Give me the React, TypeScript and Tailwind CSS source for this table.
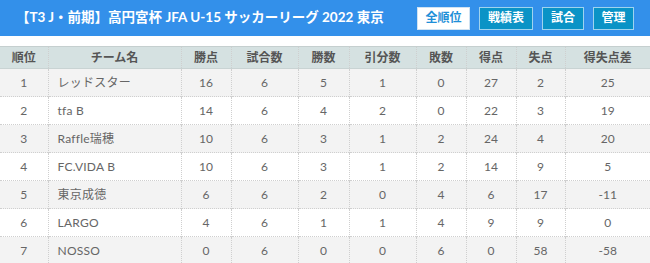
const rows = [
  { rank: 1, team: 'レッドスター', pts: 16, gp: 6, w: 5, d: 1, l: 0, gf: 27, ga: 2, gd: 25 },
  { rank: 2, team: 'tfa B', pts: 14, gp: 6, w: 4, d: 2, l: 0, gf: 22, ga: 3, gd: 19 },
  { rank: 3, team: 'Raffle瑞穂', pts: 10, gp: 6, w: 3, d: 1, l: 2, gf: 24, ga: 4, gd: 20 },
  { rank: 4, team: 'FC.VIDA B', pts: 10, gp: 6, w: 3, d: 1, l: 2, gf: 14, ga: 9, gd: 5 },
  { rank: 5, team: '東京成徳', pts: 6, gp: 6, w: 2, d: 0, l: 4, gf: 6, ga: 17, gd: -11 },
  { rank: 6, team: 'LARGO', pts: 4, gp: 6, w: 1, d: 1, l: 4, gf: 9, ga: 9, gd: 0 },
  { rank: 7, team: 'NOSSO', pts: 0, gp: 6, w: 0, d: 0, l: 6, gf: 0, ga: 58, gd: -58 },
]

const columns = [
  { label: '順位', w: 'w-[48px]' },
  { label: 'チーム名', w: 'w-[133px]' },
  { label: '勝点', w: 'w-[50px]' },
  { label: '試合数', w: 'w-[67px]' },
  { label: '勝数', w: 'w-[51px]' },
  { label: '引分数', w: 'w-[67px]' },
  { label: '敗数', w: 'w-[50px]' },
  { label: '得点', w: 'w-[50px]' },
  { label: '失点', w: 'w-[49px]' },
  { label: '得失点差', w: 'w-[85px]' },
]

const cell = 'border-l border-dotted border-[#cfcfcf] first:border-l-0 text-center'

export default function App() {
  return (
    <main className="w-[650px] h-[263px] overflow-hidden bg-white font-['Lato','Noto_Sans_CJK_JP',sans-serif]">
      <header className="h-[36px] bg-[#3390ea] flex items-center justify-between pl-4 pr-4">
        <h1 className="text-white font-bold text-[13.5px] leading-none whitespace-nowrap">【T3 J・前期】高円宮杯 JFA U-15 サッカーリーグ 2022 東京</h1>
        <nav className="flex gap-[9px] text-[12px] font-bold shrink-0">
          <a className="h-[23px] w-[53px] flex items-center justify-center bg-white text-[#1f8fd8] border border-[#cfe2f2]">全順位</a>
          <a className="h-[23px] w-[54px] flex items-center justify-center bg-[#0a93c6] text-white border border-[#9fd3ee]">戦績表</a>
          <a className="h-[23px] w-[42px] flex items-center justify-center bg-[#0a93c6] text-white border border-[#9fd3ee]">試合</a>
          <a className="h-[23px] w-[41px] flex items-center justify-center bg-[#0a93c6] text-white border border-[#9fd3ee]">管理</a>
        </nav>
      </header>

      <table className="mt-[10px] w-full table-fixed border-collapse text-[12px]">
        <thead>
          <tr className="h-[22px] bg-[#d5e1e1] border-t border-[#c5cfcf] border-b border-b-[#c9d3d3]">
            {columns.map(c => (
              <th key={c.label} className={`${c.w} ${cell} font-bold text-[#555]`}>{c.label}</th>
            ))}
          </tr>
        </thead>
        <tbody className="text-[#666]">
          {rows.map(r => (
            <tr key={r.rank} className={`h-[28px] border-b border-dotted border-[#cfcfcf] ${r.rank % 2 ? 'bg-[#f3f3f3]' : 'bg-white'}`}>
              <td className={cell}>{r.rank}</td>
              <td className={`${cell} !text-left pl-[9px] tracking-[0.02em]`}>{r.team}</td>
              <td className={cell}>{r.pts}</td>
              <td className={cell}>{r.gp}</td>
              <td className={cell}>{r.w}</td>
              <td className={cell}>{r.d}</td>
              <td className={cell}>{r.l}</td>
              <td className={cell}>{r.gf}</td>
              <td className={cell}>{r.ga}</td>
              <td className={cell}>{r.gd}</td>
            </tr>
          ))}
        </tbody>
      </table>
    </main>
  )
}
